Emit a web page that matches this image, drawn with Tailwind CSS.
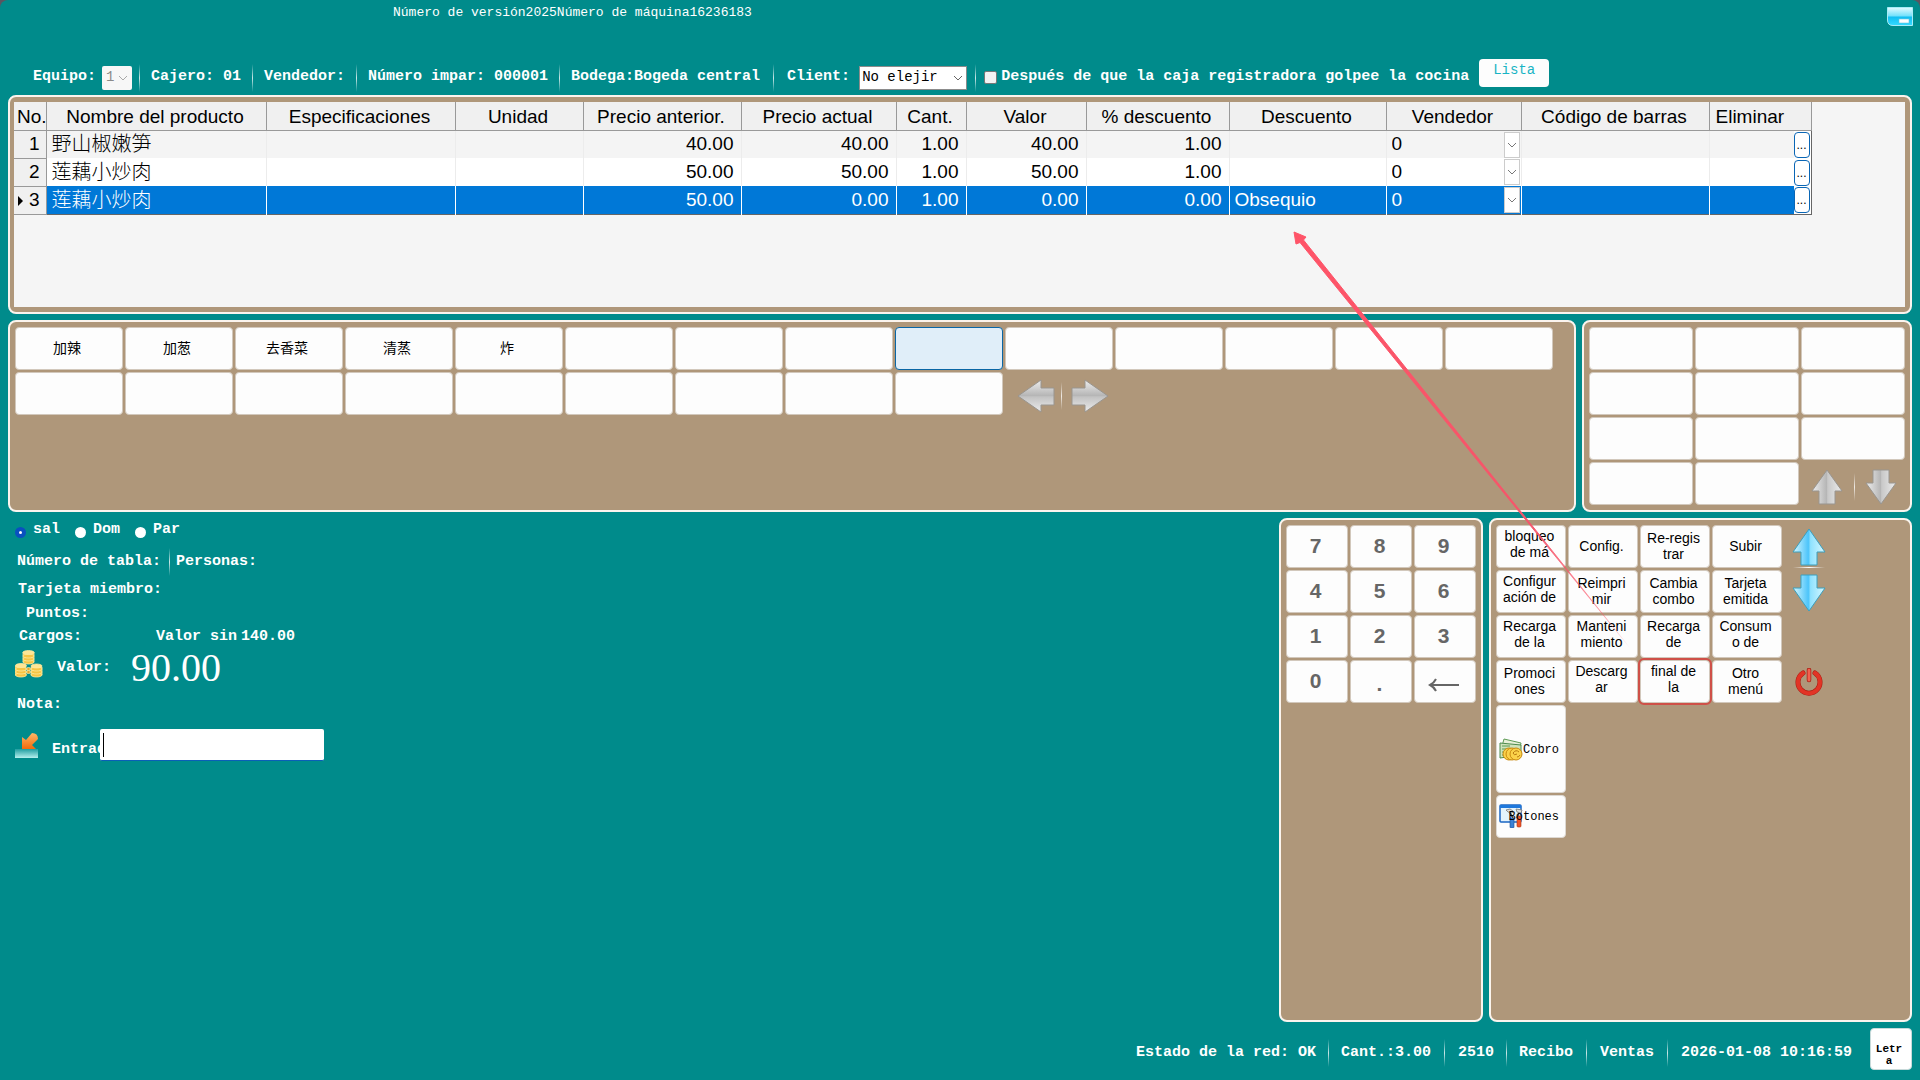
<!DOCTYPE html>
<html lang="es">
<head>
    <meta charset="UTF-8">
    <title>Caja registradora</title>
    <script src="https://cdn.jsdelivr.net/npm/@tailwindcss/browser@4"></script>
</head>
<body class="bg-[#5b5560]">
<div class="relative flex min-h-screen flex-col overflow-hidden rounded-t-lg bg-[#008b8b] px-2 font-['Liberation_Mono','Noto_Sans_CJK_SC',monospace] text-[15px] font-bold text-white">

    <!-- Barra superior -->
    <header class="flex h-[54px] items-start justify-between">
        <p class="ml-[385px] mt-[5px] text-[13px] leading-4 font-normal">Número de versión2025Número de máquina16236183</p>
        <button type="button" aria-label="Minimizar" class="mt-[7px] -mr-px">
            <svg width="26" height="20" viewBox="0 0 26 20">
                <defs>
                    <linearGradient id="min" x1="0" y1="0" x2="0" y2="1">
                        <stop offset="0" stop-color="#e4fbff"/>
                        <stop offset=".48" stop-color="#6fe0fb"/>
                        <stop offset=".52" stop-color="#10bdf2"/>
                        <stop offset="1" stop-color="#35dbff"/>
                    </linearGradient>
                </defs>
                <path d="M.5 .5H25.5V18.5H6Q.5 18.5 .5 13Z" fill="url(#min)" stroke="#a7ecf7"/>
                <rect x="12" y="12" width="10" height="4" fill="#fff" stroke="#6cc3dc" stroke-width=".6"/>
            </svg>
        </button>
    </header>

    <!-- Datos de la caja -->
    <div class="flex h-[41px] items-center pt-[6px] pl-[25px] whitespace-nowrap">
        <label for="equipo">Equipo:</label>
        <span class="relative ml-[6px]">
            <select id="equipo" disabled class="h-6 w-[30px] appearance-none rounded-xs bg-[#f7f7f7] pl-1 text-[14px] font-normal text-[#8a8a8a] opacity-100"><option>1</option></select>
            <svg class="pointer-events-none absolute top-2 right-1" width="10" height="8" fill="none" stroke="#a8a8a8"><path d="M1 2L5 6L9 2"/></svg>
        </span>
        <i class="mr-[11px] ml-[7px] h-7 w-px bg-linear-to-b from-transparent via-white/80 to-transparent"></i>
        <span>Cajero: 01</span>
        <i class="mx-[11px] h-7 w-px bg-linear-to-b from-transparent via-white/80 to-transparent"></i>
        <span>Vendedor:</span>
        <i class="mx-[11px] h-7 w-px bg-linear-to-b from-transparent via-white/80 to-transparent"></i>
        <span>Número impar: 000001</span>
        <i class="mx-[11px] h-7 w-px bg-linear-to-b from-transparent via-white/80 to-transparent"></i>
        <span>Bodega:Bogeda central</span>
        <i class="mx-[13px] h-7 w-px bg-linear-to-b from-transparent via-white/80 to-transparent"></i>
        <label for="client">Client:</label>
        <span class="relative ml-[9px]">
            <select id="client" class="h-6 w-[108px] appearance-none border border-[#8c8c8c] bg-white pl-[2px] text-[14px] font-normal text-black"><option>No elejir</option></select>
            <svg class="pointer-events-none absolute top-2 right-1" width="10" height="8" fill="none" stroke="#666"><path d="M1 2L5 6L9 2"/></svg>
        </span>
        <i class="mx-2 h-7 w-px bg-linear-to-b from-transparent via-white/80 to-transparent"></i>
        <input id="cocina" type="checkbox" class="h-[13px] w-[13px] appearance-none rounded-xs border border-[#777] bg-[#f3f3f3] checked:bg-[#0a5fc8]">
        <label for="cocina" class="ml-1">Después de que la caja registradora golpee la cocina</label>
        <button type="button" class="mb-[10px] ml-[10px] flex h-7 w-[70px] justify-center rounded-sm bg-[#fdfdfd] pt-px text-[14px] font-normal text-[#18b4c4]">Lista</button>
    </div>

    <!-- Productos -->
    <section class="h-[219px] rounded-lg border-2 border-[#fbf4ee] bg-[#af977a] py-[5px] pr-[5px] pl-1">
        <div class="h-full bg-[#f5f5f5]">
            <table class="w-[1797px] table-fixed border-collapse border-r border-b border-[#666] font-['Liberation_Sans','Noto_Sans_CJK_SC',sans-serif] text-[19px] leading-6 font-normal text-black">
                <colgroup>
                    <col class="w-[32px]"><col class="w-[220px]"><col class="w-[189px]"><col class="w-[128px]">
                    <col class="w-[158px]"><col class="w-[155px]"><col class="w-[70px]"><col class="w-[120px]">
                    <col class="w-[143px]"><col class="w-[157px]"><col class="w-[135px]"><col class="w-[188px]"><col class="w-[102px]">
                </colgroup>
                <thead>
                    <tr id="headRow" class="h-7 bg-[#f0f0f0]"></tr>
                </thead>
                <tbody id="rows"></tbody>
            </table>
        </div>
    </section>

    <div class="mt-[6px] flex h-[192px] gap-[6px]">
        <!-- Modificadores -->
        <section class="flex-1 rounded-lg border-2 border-[#fbf4ee] bg-[#af977a] p-[5px]">
            <div id="mods" class="flex flex-wrap gap-[2px] font-['Liberation_Sans','Noto_Sans_CJK_SC',sans-serif] text-[14px] font-normal text-black">
                <div id="modNav" class="flex h-[43px] items-center pt-1 pl-3">
                    <button type="button" aria-label="Anterior"><svg width="38" height="34" viewBox="0 0 38 34"><path d="M1 17L24 1V9H37V26H24V33Z" fill="url(#grisV)" stroke="#99958f"/></svg></button>
                    <i class="mr-[9px] ml-[6px] h-7 w-px bg-linear-to-b from-transparent via-white/80 to-transparent"></i>
                    <button type="button" aria-label="Siguiente"><svg width="38" height="34" viewBox="0 0 38 34"><path d="M37 17L14 1V9H1V26H14V33Z" fill="url(#grisV)" stroke="#99958f"/></svg></button>
                </div>
            </div>
        </section>

        <!-- Categorias -->
        <section class="w-[330px] rounded-lg border-2 border-[#fbf4ee] bg-[#af977a] p-[5px]">
            <div id="cats" class="grid grid-cols-3 gap-[2px]">
                <div id="catNav" class="flex h-[43px] items-center justify-between pt-[6px] pr-2 pl-[10px]">
                    <button type="button" aria-label="Subir lista"><svg width="32" height="36" viewBox="0 0 32 36"><path d="M16 1L31 22H24V35H8V22H1Z" fill="url(#grisH)" stroke="#99958f"/></svg></button>
                    <i class="h-7 w-px bg-linear-to-b from-transparent via-white/80 to-transparent"></i>
                    <button type="button" aria-label="Bajar lista"><svg width="32" height="36" viewBox="0 0 32 36"><path d="M16 35L31 14H24V1H8V14H1Z" fill="url(#grisH)" stroke="#99958f"/></svg></button>
                </div>
            </div>
        </section>
    </div>

    <div class="mt-[6px] flex flex-1 gap-[6px]">
        <!-- Pedido actual -->
        <section class="flex-1 pl-[7px] whitespace-nowrap">
            <div class="flex h-6 items-center">
                <label class="flex w-15 items-center gap-[7px]"><input type="radio" name="tipo" checked class="mt-1 h-[11px] w-[11px] appearance-none rounded-full border-[#0a50c0] bg-white checked:border-4">sal</label>
                <label class="flex w-15 items-center gap-[7px]"><input type="radio" name="tipo" class="mt-1 h-[11px] w-[11px] appearance-none rounded-full border-[#0a50c0] bg-white checked:border-4">Dom</label>
                <label class="flex w-15 items-center gap-[7px]"><input type="radio" name="tipo" class="mt-1 h-[11px] w-[11px] appearance-none rounded-full border-[#0a50c0] bg-white checked:border-4">Par</label>
            </div>
            <div class="flex h-9 items-center pt-1 pl-[2px]">
                <span>Número de tabla:</span>
                <i class="mr-[6px] ml-2 h-7 w-px bg-linear-to-b from-transparent via-white/80 to-transparent"></i>
                <span>Personas:</span>
            </div>
            <p class="flex h-6 items-center pl-[3px]">Tarjeta miembro:</p>
            <p class="flex h-6 items-center pl-[11px]">Puntos:</p>
            <div class="flex h-[23px] items-center pl-1">
                <span class="w-[137px]">Cargos:</span>
                <span class="w-[85px]">Valor sin</span>
                <span>140.00</span>
            </div>
            <div class="flex h-[38px] items-center">
                <svg class="mb-2" width="28" height="30" viewBox="0 0 28 30">
                    <g fill="#f7c544" stroke="#fbeaa0" stroke-width=".8">
                        <path d="M8 3V13H19V3Z"/><ellipse cx="13.500" cy="13" rx="5.500" ry="2"/><ellipse cx="13.500" cy="10" rx="5.500" ry="2"/><ellipse cx="13.500" cy="7" rx="5.500" ry="2"/><ellipse cx="13.500" cy="3.500" rx="5.500" ry="2" fill="#ffe694"/>
                        <path d="M0 17V26H11V17Z"/><ellipse cx="6" cy="26" rx="5.500" ry="2"/><ellipse cx="6" cy="23" rx="5.500" ry="2"/><ellipse cx="6" cy="20" rx="5.500" ry="2"/><ellipse cx="6" cy="16.500" rx="5.500" ry="2" fill="#ffe694"/>
                        <path d="M16 18V26H27V18Z"/><ellipse cx="21.500" cy="26" rx="5.500" ry="2"/><ellipse cx="21.500" cy="23" rx="5.500" ry="2"/><ellipse cx="21.500" cy="20" rx="5.500" ry="2"/><ellipse cx="21.500" cy="17" rx="5.500" ry="2" fill="#ffe694"/>
                        <ellipse cx="13.500" cy="20" rx="2" ry="1.500" fill="#e9a92e"/><ellipse cx="13.500" cy="23" rx="2" ry="1.500" fill="#e9a92e"/>
                    </g>
                </svg>
                <span class="ml-[14px] w-[74px]">Valor:</span>
                <span class="font-['Liberation_Serif',serif] text-[40px] leading-10 font-normal">90.00</span>
            </div>
            <p class="flex h-[37px] items-center pl-[2px]">Nota:</p>
            <div class="flex h-[42px] items-center">
                <svg class="mb-px" width="24" height="28" viewBox="0 0 24 28">
                    <defs>
                        <linearGradient id="bandeja" x1="0" y1="0" x2="0" y2="1"><stop offset="0" stop-color="#1f9da0"/><stop offset="1" stop-color="#b5f0ee"/></linearGradient>
                        <linearGradient id="naranja" x1="0" y1="0" x2="0" y2="1"><stop offset="0" stop-color="#ffb766"/><stop offset="1" stop-color="#f26a0c"/></linearGradient>
                    </defs>
                    <rect y="18" width="23" height="9" fill="url(#bandeja)"/>
                    <path d="M7 18V6L11 9L17 2Q23 2 23 8L17 14L21 18Z" fill="url(#naranja)"/>
                </svg>
                <label for="entrada" class="mt-[10px] ml-[13px] w-[48px]">Entrada:</label>
                <div class="relative flex">
                    <input id="entrada" type="text" class="h-8 w-[224px] rounded-xs border-b border-[#0a5fb8] bg-white px-1 text-black caret-transparent outline-none">
                    <i class="absolute top-1 left-[3px] h-6 w-px bg-black"></i>
                </div>
            </div>
        </section>

        <!-- Teclado -->
        <section class="w-[204px] rounded-lg border-2 border-[#fbf4ee] bg-[#af977a] p-[5px]">
            <div id="keys" class="grid grid-cols-3 gap-[2px] font-['Liberation_Sans',sans-serif] text-[21px] text-[#666]"></div>
        </section>

        <!-- Funciones -->
        <section class="flex w-[423px] items-start rounded-lg border-2 border-[#fbf4ee] bg-[#af977a] p-[5px]">
            <div id="funcs" class="grid grid-cols-4 gap-[2px] font-['Liberation_Sans',sans-serif] text-[14px] leading-4 font-normal text-black">
                <button id="cobro" type="button" class="col-start-1 flex h-[88px] w-[70px] items-center rounded-sm border border-[#ddd8d2] bg-[#fdfdfd] pt-[2px] pl-[2px] font-['Liberation_Mono',monospace] text-[12px]">
                    <svg class="shrink-0" width="24" height="24" viewBox="0 0 24 24">
                        <path d="M5 1L22 5L21 11L3 8Z" fill="#e7f0d8" stroke="#5d9a55"/>
                        <path d="M1 5L22 7V17L1 20Z" fill="#cfe3bb" stroke="#4d8a4d"/>
                        <path d="M3 8H11M3 11H8M3 14H7M3 17H7" stroke="#5d9a55"/>
                        <g fill="#fbd24a" stroke="#c98a10"><circle cx="10" cy="16" r="6"/><circle cx="13" cy="16" r="6"/><circle cx="17" cy="16" r="6"/></g>
                        <path d="M20 14Q17 11 14 15Q15 18 18 16M18 19Q20 19 21 17" fill="none" stroke="#b97a10"/>
                    </svg>
                    <span>Cobro</span>
                </button>
                <button id="botones" type="button" class="relative col-start-1 flex h-[43px] w-[70px] items-center justify-end rounded-sm border border-[#ddd8d2] bg-[#fdfdfd] pt-px pr-[6px] font-['Liberation_Mono',monospace] text-[12px]">
                    <svg class="absolute top-2 left-[2px]" width="24" height="24" viewBox="0 0 24 24">
                        <rect x="1" y="1" width="21" height="17" rx="1" fill="#e4f3fc" stroke="#1a66c2" stroke-width="1.500"/>
                        <rect x="1" y="1" width="21" height="3" fill="#1f78dc"/>
                        <path d="M7 6L11 5L14 7L13 9L9 8ZM17 5L23 6L22 9L18 8Z" fill="#ddd" stroke="#777" stroke-width=".8"/>
                        <path d="M11 9L14 14M20 9L18 14" stroke="#444" stroke-width="1.500"/>
                        <rect x="11" y="14" width="4" height="10" rx="1" fill="#3b82d6" stroke="#1b4f96" stroke-width=".6"/>
                        <rect x="18" y="12" width="4" height="11" rx="1" fill="#f0562a" stroke="#a83010" stroke-width=".6"/>
                    </svg>
                    <span class="relative">Botones</span>
                </button>
            </div>
            <div class="flex flex-col items-center pt-[3px] pl-[10px]">
                <button type="button" aria-label="Página arriba"><svg width="34" height="38" viewBox="0 0 34 38"><path d="M17 1L33 24H25V37H9V24H1Z" fill="url(#azul)" stroke="#3b9fbd"/></svg></button>
                <i class="mt-px h-px w-8 bg-linear-to-r from-transparent via-white to-transparent"></i>
                <button type="button" aria-label="Página abajo" class="mt-[6px]"><svg width="34" height="38" viewBox="0 0 34 38"><path d="M17 37L33 14H25V1H9V14H1Z" fill="url(#azul)" stroke="#3b9fbd"/></svg></button>
                <button type="button" aria-label="Apagar" class="mt-14">
                    <svg width="28" height="28" viewBox="0 0 28 28" fill="none" stroke-linecap="round">
                        <path d="M8 5A11 11 0 1 0 20 5" stroke="#a81d12" stroke-width="5"/>
                        <path d="M8 5A11 11 0 1 0 20 5" stroke="#e23426" stroke-width="4"/>
                        <path d="M14 2V12" stroke="#a81d12" stroke-width="4.500"/><path d="M14 2V12" stroke="#f2604e" stroke-width="3"/>
                    </svg>
                </button>
            </div>
        </section>
    </div>

    <!-- Barra de estado -->
    <footer class="flex h-[58px] items-center justify-end pt-1 whitespace-nowrap">
        <span>Estado de la red: OK</span>
        <i class="mx-3 h-7 w-px bg-linear-to-b from-transparent via-white/80 to-transparent"></i>
        <span>Cant.:3.00</span>
        <i class="mx-[13px] h-7 w-px bg-linear-to-b from-transparent via-white/80 to-transparent"></i>
        <span>2510</span>
        <i class="mx-3 h-7 w-px bg-linear-to-b from-transparent via-white/80 to-transparent"></i>
        <span>Recibo</span>
        <i class="mx-[13px] h-7 w-px bg-linear-to-b from-transparent via-white/80 to-transparent"></i>
        <span>Ventas</span>
        <i class="mx-[13px] h-7 w-px bg-linear-to-b from-transparent via-white/80 to-transparent"></i>
        <span>2026-01-08 10:16:59</span>
        <button type="button" class="mb-2 ml-[18px] h-[42px] w-[42px] rounded-sm border border-[#c8dada] bg-white pt-3 pr-1 text-[11px] leading-3 text-black">Letr<br>a</button>
    </footer>

    <!-- Flecha de aviso -->
    <svg class="pointer-events-none absolute top-[228px] left-[1290px]" width="345" height="425" viewBox="0 0 345 425">
        <defs>
            <linearGradient id="rojo" gradientUnits="userSpaceOnUse" x1="4" y1="4" x2="340" y2="420">
                <stop offset="0" stop-color="#ff5468"/>
                <stop offset=".7" stop-color="#f4566a"/>
                <stop offset="1" stop-color="#ff5468" stop-opacity="0"/>
            </linearGradient>
            <linearGradient id="grisV" x1="0" y1="0" x2="0" y2="1"><stop offset="0" stop-color="#eee"/><stop offset=".5" stop-color="#b4b4b4"/><stop offset=".52" stop-color="#c2c2c2"/><stop offset="1" stop-color="#ececec"/></linearGradient>
            <linearGradient id="grisH" x1="0" y1="0" x2="1" y2="0"><stop offset="0" stop-color="#eee"/><stop offset=".5" stop-color="#b4b4b4"/><stop offset=".52" stop-color="#c8c8c8"/><stop offset="1" stop-color="#ececec"/></linearGradient>
            <linearGradient id="azul" x1="0" y1="0" x2="1" y2="0"><stop offset="0" stop-color="#d8f8ff"/><stop offset=".48" stop-color="#4cc4fa"/><stop offset=".55" stop-color="#8fe2ff"/><stop offset="1" stop-color="#d8f8ff"/></linearGradient>
        </defs>
        <path d="M4 4L6 16L10 14.500L340 420L13.500 12L16 9Z" fill="url(#rojo)" stroke="url(#rojo)" stroke-width="1"/>
    </svg>
</div>

<script>
    const headers = ['No.', 'Nombre del producto', 'Especificaciones', 'Unidad', 'Precio anterior.', 'Precio actual', 'Cant.', 'Valor', '% descuento', 'Descuento', 'Vendedor', 'Código de barras', 'Eliminar'];
    const products = [
        ['野山椒嫩笋', '40.00', '40.00', '1.00', '40.00', '1.00', ''],
        ['莲藕小炒肉', '50.00', '50.00', '1.00', '50.00', '1.00', ''],
        ['莲藕小炒肉', '50.00', '0.00', '1.00', '0.00', '0.00', 'Obsequio']
    ];

    document.getElementById('headRow').innerHTML = headers.map((h, i) => {
        const align = i === 0 ? 'pl-[3px] text-left' : i === 12 ? 'pl-[6px] text-left' : 'pr-[2px] text-center';
        return `<th class="border-r border-b border-[#999] p-0 pt-[2px] font-normal whitespace-nowrap ${align}">${h}</th>`;
    }).join('');

    const rowStyles = [
        'h-7 bg-[#f4f4f4]',
        'h-7 bg-white',
        'h-7 bg-[#0078d7] text-white'
    ];
    document.getElementById('rows').innerHTML = products.map((p, i) => {
        const line = i === 2 ? 'border-white' : 'border-[#ececec]';
        const nums = p.slice(1, 6).map(n => `<td class="border-r p-0 pr-[7px] text-right ${line}">${n}</td>`).join('');
        const mark = i === 2 ? '<svg class="absolute top-[9px] left-[4px]" width="6" height="10"><path d="M0 0L5 5L0 10Z"/></svg>' : '';
        return `<tr class="${rowStyles[i]}">
            <th class="relative border-r border-b border-[#999] bg-[#f0f0f0] p-0 pr-[6px] text-right font-normal text-black">${mark}${i + 1}</th>
            <td class="border-r p-0 pl-[5px] text-[20px] leading-6 font-light ${line}">${p[0]}</td>
            <td class="border-r ${line}"></td>
            <td class="border-r ${line}"></td>
            ${nums}
            <td class="border-r p-0 pl-[5px] ${line}">${p[6]}</td>
            <td class="relative border-r p-0 ${line}">
                <select aria-label="Vendedor" class="block h-6 w-full appearance-none bg-transparent pl-[5px] leading-6"><option>0</option></select>
                <svg class="pointer-events-none absolute top-px right-px" width="16" height="26" fill="none"><rect x=".5" y=".5" width="15" height="25" fill="#fff" stroke="#ccc"/><path d="M4 11L8 15L12 11" stroke="#777"/></svg>
            </td>
            <td class="border-r ${line}"></td>
            <td class="bg-white p-0">
                <div class="mr-[17px] h-7 ${i === 2 ? 'bg-[#0078d7]' : i === 0 ? 'bg-[#f4f4f4]' : 'bg-white'}"></div>
                <button type="button" aria-label="Eliminar" class="-mt-[27px] mr-px ml-auto block h-[26px] w-[16px] rounded-sm border border-[#0a66b5] bg-white text-center text-[12px] leading-6 text-black">...</button>
            </td>
        </tr>`;
    }).join('');

    const modNames = ['加辣', '加葱', '去香菜', '清蒸', '炸'];
    let mods = '';
    for (let i = 0; i < 23; i++) {
        const look = i === 8 ? 'border-[#0a66a5] bg-[#e0eef9]' : 'border-[#d2c8bc] bg-[#fdfdfd]';
        mods += `<button type="button" class="h-[43px] w-[108px] rounded-sm border pr-1 ${look}">${modNames[i] || ''}</button>`;
    }
    document.getElementById('modNav').insertAdjacentHTML('beforebegin', mods);

    document.getElementById('catNav').insertAdjacentHTML('beforebegin',
        '<button type="button" class="h-[43px] rounded-sm border border-[#d2c8bc] bg-[#fdfdfd]"></button>'.repeat(11));

    document.getElementById('keys').innerHTML = ['7', '8', '9', '4', '5', '6', '1', '2', '3', '0', '.', '←'].map(k => {
        const label = k === '←' ? '<svg class="mx-auto mt-2" width="32" height="14" fill="none" stroke="#666" stroke-width="2"><path d="M2 7H31M8 1Q6 5 2 7Q6 9 8 13"/></svg>' : k;
        const pos = k === '.' ? 'pt-1' : 'pb-[2px]';
        return `<button type="button" aria-label="${k}" class="h-[43px] rounded-sm border border-[#d2c8bc] bg-[#fdfdfd] pr-[3px] ${pos}">${label}</button>`;
    }).join('');

    const funcNames = ['bloqueo<br>de má', 'Config.', 'Re-regis<br>trar', 'Subir', 'Configur<br>ación de', 'Reimpri<br>mir', 'Cambia<br>combo', 'Tarjeta<br>emitida', 'Recarga<br>de la', 'Manteni<br>miento', 'Recarga<br>de', 'Consum<br>o de', 'Promoci<br>ones', 'Descarg<br>ar', 'final de<br>la', 'Otro<br>menú'];
    const raised = [0, 4, 8, 9, 10, 11, 13, 14];
    document.getElementById('cobro').insertAdjacentHTML('beforebegin', funcNames.map((f, i) => {
        const pos = raised.includes(i) ? 'pb-[5px]' : 'pb-px';
        const look = i === 14 ? 'border-[#d2c8bc] outline-2 outline-[#cf5048]' : 'border-[#d2c8bc]';
        return `<button type="button" class="h-[43px] w-[70px] rounded-sm border bg-[#fdfdfd] pr-[3px] ${look} ${pos}">${f}</button>`;
    }).join(''));
</script>
</body>
</html>
